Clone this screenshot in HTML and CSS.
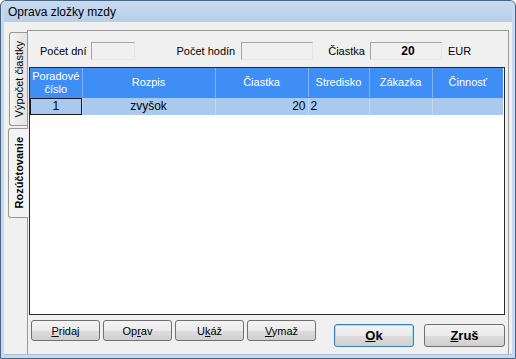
FILE: index.html
```html
<!DOCTYPE html>
<html lang="sk">
<head>
    <meta charset="UTF-8">
    <title>Oprava zložky mzdy</title>
    <link rel="stylesheet" href="styles.css">
</head>
<body>
    <div class="window">
        <div class="titlebar">Oprava zložky mzdy</div>
        <div class="client">
            <div class="tabs">
                <div class="tab"><span>Výpočet čiastky</span></div>
                <div class="tab active"><span>Rozúčtovanie</span></div>
            </div>
            <div class="panel">
                <div class="fields">
                    <label>Počet dní</label>
                    <div class="field f-dni"></div>
                    <label class="l-hod">Počet hodín</label>
                    <div class="field f-hod"></div>
                    <label class="l-ciastka">Čiastka</label>
                    <div class="field f-ciastka">20</div>
                    <label class="l-eur">EUR</label>
                </div>

                <div class="grid">
                    <table>
                        <colgroup>
                            <col style="width:52px">
                            <col style="width:133px">
                            <col style="width:93px">
                            <col style="width:61px">
                            <col style="width:63px">
                            <col style="width:71px">
                        </colgroup>
                        <thead>
                            <tr>
                                <th>Poradové<br>číslo</th>
                                <th>Rozpis</th>
                                <th>Čiastka</th>
                                <th>Stredisko</th>
                                <th>Zákazka</th>
                                <th>Činnosť</th>
                            </tr>
                        </thead>
                        <tbody>
                            <tr class="selected">
                                <td class="focus">1</td>
                                <td class="center">zvyšok</td>
                                <td class="num">20</td>
                                <td>2</td>
                                <td></td>
                                <td></td>
                            </tr>
                        </tbody>
                    </table>
                </div>

                <div class="actions">
                    <div class="small-buttons">
                        <button class="btn"><u>P</u>ridaj</button>
                        <button class="btn">Op<u>r</u>av</button>
                        <button class="btn">U<u>k</u>áž</button>
                        <button class="btn"><u>V</u>ymaž</button>
                    </div>
                    <div class="main-buttons">
                        <button class="btn big default"><u>O</u>k</button>
                        <button class="btn big"><u>Z</u>ruš</button>
                    </div>
                </div>
            </div>
        </div>
    </div>
</body>
</html>
```

FILE: styles.css
```css
body {
    margin: 0;
    font-family: 'Liberation Sans', Arial, sans-serif;
    font-size: 11px;
    color: #000;
    background: #fff;
}
.window {
    width: 516px;
    height: 359px;
    box-sizing: border-box;
    border: 1px solid #4a6584;
    border-radius: 6px 6px 0 0;
    background: #c6d9ee;
    padding: 0 3px 3px 3px;
    display: flex;
    flex-direction: column;
    overflow: hidden;
}
.titlebar {
    height: 21px;
    line-height: 22px;
    padding-left: 4px;
    font-size: 12px;
    background: linear-gradient(#c8dbf0, #b7cde7);
    flex-shrink: 0;
}
.client {
    flex: 1;
    display: flex;
    background: #f0f0f0;
    padding-top: 8px;
    border-bottom: 1px solid #a9bdd3;
}
.tabs {
    width: 23px;
    display: flex;
    flex-direction: column;
    align-items: flex-end;
    padding-top: 2px;
}
.tab {
    width: 17px;
    height: 92px;
    border: 1px solid #979797;
    border-right: none;
    border-radius: 3px 0 0 3px;
    background: linear-gradient(90deg, #f4f4f4, #e3e3e3);
    display: flex;
    align-items: center;
    justify-content: center;
}
.tab span {
    writing-mode: vertical-rl;
    transform: rotate(180deg);
    white-space: nowrap;
}
.tab.active {
    width: 19px;
    height: 88px;
    margin-top: 2px;
    margin-right: -1px;
    background: #f4f4f4;
    position: relative;
    z-index: 1;
    font-weight: bold;
}
.panel {
    flex: 1;
    margin-right: 3px;
    border: 1px solid #9a9a9a;
    border-bottom: none;
    background: #f0f0f0;
    padding: 11px 0 0 1px;
    display: flex;
    flex-direction: column;
}
.fields {
    display: flex;
    align-items: center;
    height: 18px;
    padding-left: 11px;
}
.field {
    height: 18px;
    box-sizing: border-box;
    border: 1px solid #a5a5a5;
    border-right-color: #e6e6e6;
    border-bottom-color: #e6e6e6;
    background: #f0f0f0;
}
.fields label {
    margin-right: 5px;
}
.f-dni { width: 44px; margin-right: 41px; }
.f-hod { width: 72px; margin-right: 15px; }
.l-hod { margin-right: 6px !important; }
.f-ciastka {
    width: 72px;
    margin-right: 6px;
    font-weight: bold;
    font-size: 12px;
    text-align: center;
    line-height: 16px;
    padding-left: 4px;
}
.grid {
    margin-top: 7px;
    width: 476px;
    height: 248px;
    box-sizing: border-box;
    border: 1px solid #2a2a2a;
    background: #fff;
}
table {
    border-collapse: collapse;
    table-layout: fixed;
    width: 473px;
}
th {
    height: 29px;
    padding: 0;
    background: #3f8ef5;
    color: #fff;
    font-weight: normal;
    line-height: 13px;
    border-right: 1px solid #80b3f7;
    border-bottom: 1px solid #3f8ef5;
}
th:last-child { border-right: none; }
td {
    height: 16px;
    padding: 0 2px;
    background: #a9c9ef;
    border-right: 1px solid #c2d8f2;
    border-bottom: 1px solid #a9c9ef;
    font-size: 12px;
}
td:last-child { border-right: none; }
td.focus {
    text-align: center;
    outline: 1px solid #1a1a1a;
    outline-offset: -1px;
}
td.center { text-align: center; }
td.num { text-align: right; }
.actions {
    display: flex;
    padding-left: 2px;
    margin-top: 5px;
}
.small-buttons {
    display: flex;
    gap: 3px;
}
.btn {
    width: 69px;
    height: 21px;
    margin: 0;
    padding: 0;
    box-sizing: border-box;
    font-family: 'Liberation Sans', Arial, sans-serif;
    font-size: 11px;
    color: #000;
    border: 1px solid #707070;
    border-radius: 3px;
    background: linear-gradient(#f3f3f3 0%, #ebebeb 50%, #dddddd 51%, #cfcfcf 100%);
}
.main-buttons {
    display: flex;
    gap: 10px;
    margin-left: 18px;
    margin-top: 4px;
}
.btn.big {
    width: 81px;
    height: 23px;
    font-size: 13px;
    font-weight: bold;
}
.btn.default {
    width: 80px;
    border-color: #3c7fb1;
    box-shadow: inset 0 0 0 1px #9ee0f8;
}
```
